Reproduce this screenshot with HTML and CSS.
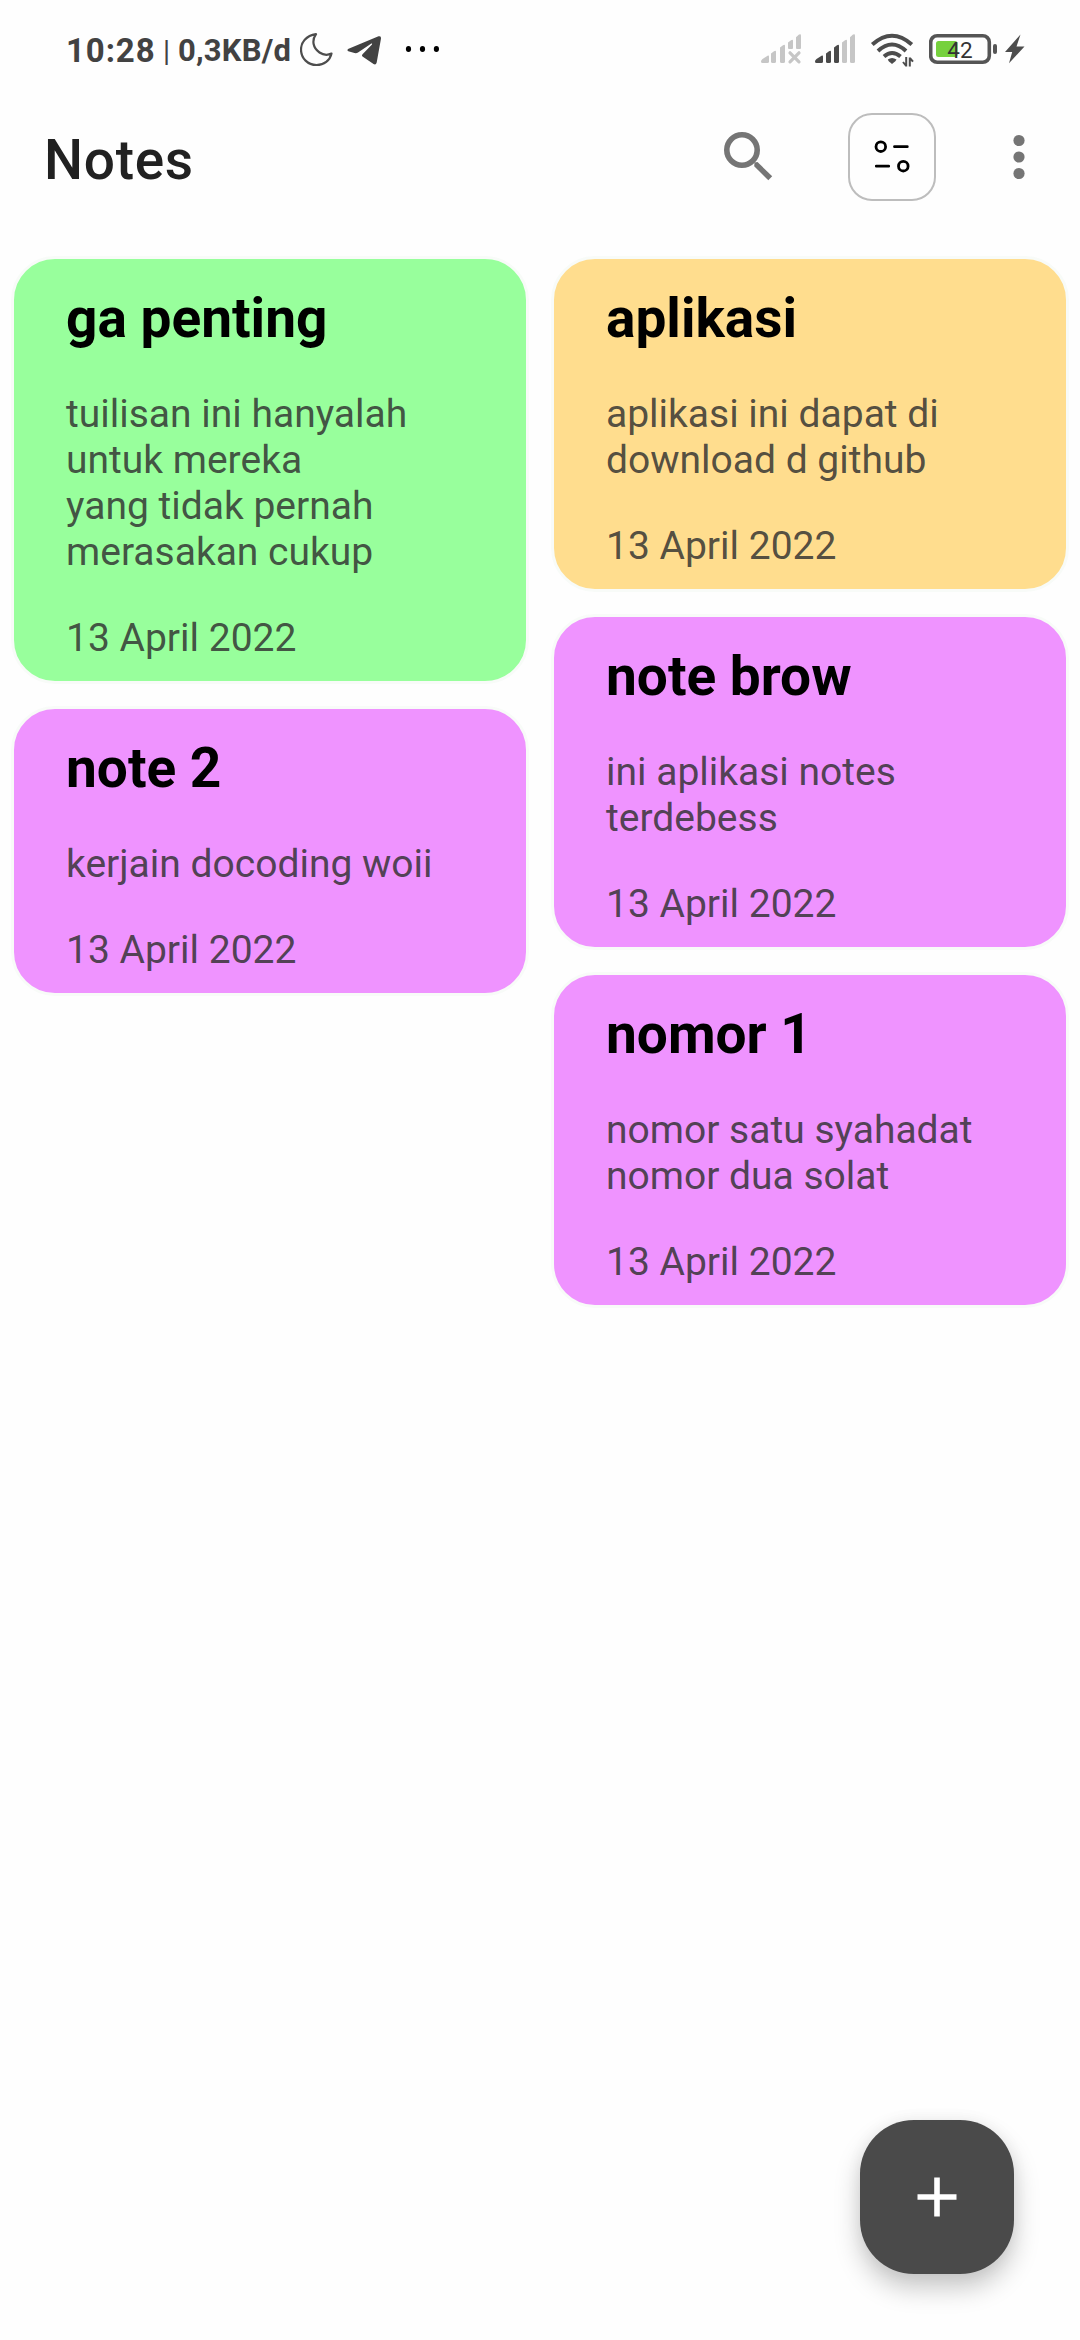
FILE: index.html
```html
<!DOCTYPE html>
<html lang="id">
<head>
<meta charset="utf-8">
<title>Notes</title>
<link rel="stylesheet" href="styles.css">
</head>
<body>
<div class="screen">
  <div class="status">
    <div class="status-left">
      <span class="clock">10:28</span>
      <span class="divider">|</span>
      <span class="speed">0,3KB/d</span>
      <svg class="moon" width="34" height="40" viewBox="300 30 34 40"><path d="M316 34.200C306 35.800 301 42.500 301 49.500C301 58.500 308 65 316.500 65C324 65 330 60.500 331.500 53.500C328 55.200 323.500 55.200 319.500 52.500C313 48 311.500 40.500 316 34.200Z" fill="none" stroke="#4d4d4d" stroke-width="2.200" stroke-linejoin="round"/></svg>
      <svg class="plane" width="36" height="40" viewBox="346 30 36 40"><path d="M348 49L378.500 36.300Q381.300 35.500 381 38.500L376.700 62.500Q376 65.300 373.500 64L362.500 56.500Q361.300 55.500 362.500 54.300L372 44.500C372.500 43.700 371.800 43.300 371 43.800L358 52.500Q356.500 53.500 354.500 53L348.300 51.200Q346.500 50.300 348 49Z" fill="#424242"/></svg>
      <svg class="more" width="34" height="40" viewBox="405 30 34 40"><ellipse cx="408.500" cy="49" rx="2.600" ry="3"/><ellipse cx="422.500" cy="49" rx="2.600" ry="3"/><ellipse cx="436.400" cy="49" rx="2.600" ry="3"/></svg>
    </div>
    <div class="status-right">
      <svg width="42" height="40" viewBox="760 30 42 40"><g fill="#c6c6c6"><path d="M761 61.500Q761 60 762.500 59L768 55.500Q769 55.200 769 56.500V61.500Q769 63 767.500 63H762.500Q761 63 761 61.500Z"/><path d="M771 53.500L774 51.200Q776 50 776 52V61.500Q776 63 774.500 63H772.500Q771 63 771 61.500Z"/><path d="M780 47.500L783 45.200Q785 44 785 46V61.500Q785 63 783.500 63H781.500Q780 63 780 61.500Z"/><path d="M788 42.500L791 40.200Q793 39 793 41V48Q793 49 792 49H789Q788 49 788 48Z"/><path d="M796 37.200L799 34.600Q801 33.500 801 35.500V48Q801 49 800 49H797Q796 49 796 48Z"/></g><path d="M790 52.800L799 61.800M799 52.800L790 61.800" stroke="#c6c6c6" stroke-width="3.200" stroke-linecap="round"/></svg>
      <svg class="signal" width="42" height="40" viewBox="814 30 42 40"><g fill="#4a4a4a"><path d="M815 61.500Q815 60 816.500 59L822 55.500Q823 55.200 823 56.500V61.500Q823 63 821.500 63H816.500Q815 63 815 61.500Z"/><path d="M826 53.500L829 51.200Q831 50 831 52V61.500Q831 63 829.500 63H827.500Q826 63 826 61.500Z"/><path d="M834 47.500L837 45.200Q839 44 839 46V61.500Q839 63 837.500 63H835.500Q834 63 834 61.500Z"/></g><g fill="#c6c6c6"><path d="M842 42.500L845 40.200Q847 39 847 41V61.500Q847 63 845.500 63H843.500Q842 63 842 61.500Z"/><path d="M850 37.200L853 34.600Q855 33.500 855 35.500V61.500Q855 63 853.500 63H851.500Q850 63 850 61.500Z"/></g></svg>
      <svg class="wifi" width="44" height="40" viewBox="870 30 44 40"><g fill="none" stroke="#4d4d4d" stroke-width="4"><path d="M872.300 44.500Q892 27 911.800 44.500"/><path d="M878 51Q892 38 906 51"/><path d="M884 56.500Q892 49.500 900.500 56.500"/></g><path d="M887.800 59.500Q892 56.500 896.500 59.500Q896 61 892 64Q888 61 887.800 59.500Z" fill="#4d4d4d"/><path d="M906.200 57V66.500M903 62L906.200 66M909.800 66.500V57.500M909.800 58L913 61.700" fill="none" stroke="#4d4d4d" stroke-width="2"/></svg>
      <svg class="battery" width="69" height="40" viewBox="929 30 69 40"><rect x="930.700" y="35.700" width="58.600" height="26.600" rx="6.500" fill="none" stroke="#555" stroke-width="3.600"/><rect x="936" y="41" width="21.500" height="16" rx="2.500" fill="#76d13d"/><rect x="993" y="44" width="4" height="10" rx="2" fill="#555"/><text x="960" y="57.800" text-anchor="middle">42</text></svg>
      <svg class="bolt" width="20" height="40" viewBox="1005 30 20 40"><path d="M1020.500 34.500L1005 52H1012.200L1009 63.200L1024.500 46.500H1016.500Z" fill="#4d4d4d"/></svg>
    </div>
  </div>

  <header class="toolbar">
    <h1>Notes</h1>
    <div class="actions">
      <svg width="50" height="50" viewBox="724 132 50 50"><circle cx="742" cy="150" r="15.200" fill="none" stroke="#757575" stroke-width="5.600"/><path d="M754.500 162.500L757.500 162L772.200 176.300L768.300 180.200L754.200 166.200Z" fill="#757575"/></svg>
      <div class="filter"><svg width="40" height="40" viewBox="872 137 40 40" fill="none" stroke="#000" stroke-width="2.800" stroke-linecap="round"><circle cx="880.800" cy="146.700" r="4.800"/><path d="M894.500 146.700H907.300M876.300 166.200H888.700"/><circle cx="903.300" cy="166.200" r="4.800"/></svg></div>
      <svg class="overflow" width="12" height="50" viewBox="1013 132 12 50" fill="#757575"><circle cx="1019" cy="140.500" r="5.600"/><circle cx="1019" cy="157" r="5.600"/><circle cx="1019" cy="173.500" r="5.600"/></svg>
    </div>
  </header>

  <main class="notes">
    <div class="column">
      <article class="note green">
        <h2>ga penting</h2>
        <p>tuilisan ini hanyalah<br>untuk mereka<br>yang tidak pernah<br>merasakan cukup</p>
        <time>13 April 2022</time>
      </article>
      <article class="note pink">
        <h2>note 2</h2>
        <p>kerjain docoding woii</p>
        <time>13 April 2022</time>
      </article>
    </div>
    <div class="column">
      <article class="note yellow">
        <h2>aplikasi</h2>
        <p>aplikasi ini dapat di<br>download d github</p>
        <time>13 April 2022</time>
      </article>
      <article class="note pink">
        <h2>note brow</h2>
        <p>ini aplikasi notes<br>terdebess</p>
        <time>13 April 2022</time>
      </article>
      <article class="note pink">
        <h2>nomor 1</h2>
        <p>nomor satu syahadat<br>nomor dua solat</p>
        <time>13 April 2022</time>
      </article>
    </div>
  </main>

  <button class="fab" aria-label="Add"><svg width="40" height="40" viewBox="0 0 40 40"><path d="M20 .5V39.500M.5 20H39.500" stroke="#fff" stroke-width="5.600"/></svg></button>
</div>
</body>
</html>
```
FILE: styles.css
```css
* { box-sizing: border-box; }
body { margin: 0; font-family: Roboto, sans-serif; background: #fefefe; }
svg { display: block; flex: none; }
h1, h2, p { margin: 0; }

.screen { position: relative; width: 1080px; height: 2340px; overflow: hidden; }

.status {
  display: flex;
  justify-content: space-between;
  height: 100px;
  padding: 0 55px 0 66px;
  color: #424242;
}
.status-left, .status-right { display: flex; align-items: center; }
.status-left span { white-space: nowrap; line-height: 40px; padding-top: 1px; }
.clock { width: 97px; font-size: 33px; font-weight: 700; letter-spacing: 0.9px; }
.divider { width: 15px; font-size: 29px; }
.speed { width: 122px; font-size: 31px; font-weight: 700; letter-spacing: 0.2px; }
.plane { margin-left: 12px; }
.more { margin-left: 23px; }
.signal { margin-left: 12px; }
.wifi { margin-left: 14px; }
.battery { margin-left: 15px; }
.battery text { font-size: 22.5px; fill: #333; }
.bolt { margin-left: 7px; }

.toolbar {
  display: flex;
  justify-content: space-between;
  align-items: center;
  height: 114px;
  padding: 0 55px 0 44px;
}
h1 {
  padding-top: 6px;
  font-size: 55px;
  line-height: 64px;
  font-weight: 500;
  letter-spacing: 0.7px;
  color: #212121;
}
.actions { display: flex; align-items: center; }
.filter {
  display: flex;
  align-items: center;
  justify-content: center;
  width: 88px;
  height: 88px;
  margin-left: 74px;
  border: 2px solid #bdbdbd;
  border-radius: 24px;
}
.overflow { margin-left: 77px; }

.notes { display: flex; gap: 22px; padding: 42px 11px 0; }
.column { display: flex; flex-direction: column; gap: 22px; width: 518px; }
.note {
  display: flex;
  flex-direction: column;
  gap: 40px;
  padding: 27px 52px 20px;
  border: 3px solid #f8fbf8;
  border-radius: 44px;
}
.note h2 { font-size: 55px; line-height: 65px; font-weight: 700; color: #000; }
.note p, .note time {
  font-size: 39px;
  line-height: 46px;
  white-space: nowrap;
  color: rgba(48, 48, 48, 0.84);
}
.green { background-color: #98ff9c; }
.yellow { background-color: #ffdd8e; }
.pink { background-color: #ef93ff; }

.fab {
  position: absolute;
  right: 66px;
  bottom: 66px;
  display: flex;
  align-items: center;
  justify-content: center;
  width: 154px;
  height: 154px;
  padding: 0;
  border: 0;
  border-radius: 54px;
  background: #4a4a4a;
  box-shadow: 0 14px 26px rgba(0, 0, 0, 0.22), 0 0 16px rgba(0, 0, 0, 0.05);
}
```
